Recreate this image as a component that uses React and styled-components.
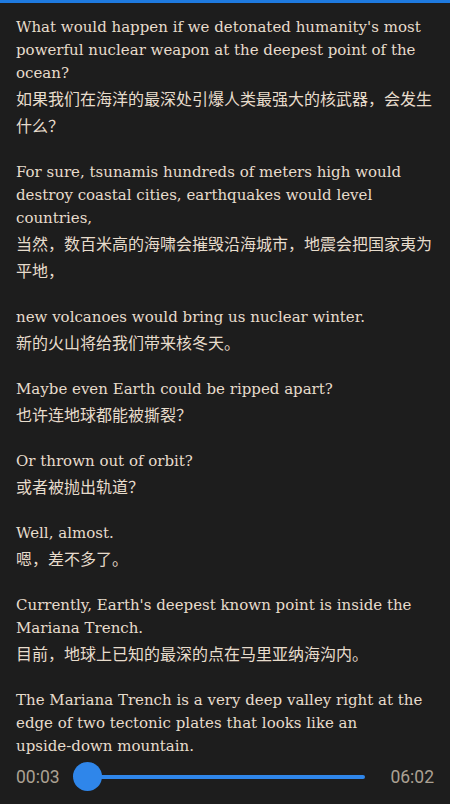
import React from 'react';
import styled, { createGlobalStyle } from 'styled-components';

const GlobalStyle = createGlobalStyle`
  html, body {
    margin: 0;
    padding: 0;
    background: #1d1d1d;
  }
`;

const Screen = styled.div`
  width: 450px;
  height: 804px;
  display: flex;
  flex-direction: column;
  background: #1d1d1d;
  border-top: 3px solid #1e7ae0;
  box-sizing: border-box;
  overflow: hidden;
`;

const Transcript = styled.div`
  flex: 1;
  min-height: 0;
  overflow: hidden;
  padding: 12.5px 16px 0 16px;
  display: flex;
  flex-direction: column;
  gap: 22px;
`;

const Paragraph = styled.div`
  display: flex;
  flex-direction: column;
  flex-shrink: 0;
`;

const English = styled.p`
  margin: 0;
  font-family: "DejaVu Serif", "Liberation Serif", serif;
  font-size: 15px;
  line-height: 23px;
  color: #e7dccc;
`;

const Unbroken = styled.span`
  white-space: nowrap;
`;

const Chinese = styled.p`
  margin: 0;
  font-family: "Noto Sans CJK SC", sans-serif;
  font-size: 16px;
  line-height: 27px;
  color: #e7dccc;
`;

const Player = styled.div`
  height: 47px;
  flex-shrink: 0;
  display: flex;
  align-items: center;
  padding: 0 16px 8px;
  box-sizing: border-box;
  background: #1d1d1d;
`;

const Time = styled.span`
  font-family: "Roboto", "Liberation Sans", sans-serif;
  font-size: 17.5px;
  color: #aba193;
`;

const Slider = styled.div`
  position: relative;
  flex: 1;
  height: 29px;
  margin: 0 25px 0 13px;
`;

const Track = styled.div`
  position: absolute;
  left: 14px;
  right: 0;
  top: 50%;
  height: 4px;
  transform: translateY(-50%);
  background: #2f86ea;
  border-radius: 2px;
`;

const Thumb = styled.div`
  position: absolute;
  top: 0;
  width: 29px;
  height: 29px;
  border-radius: 50%;
  background: #2f86ea;
`;

const lines = [
  ["What would happen if we detonated humanity's most powerful nuclear weapon at the deepest point of the ocean?", '如果我们在海洋的最深处引爆人类最强大的核武器，会发生什么？'],
  ['For sure, tsunamis hundreds of meters high would destroy coastal cities, earthquakes would level countries,', '当然，数百米高的海啸会摧毁沿海城市，地震会把国家夷为平地，'],
  ['new volcanoes would bring us nuclear winter.', '新的火山将给我们带来核冬天。'],
  ['Maybe even Earth could be ripped apart?', '也许连地球都能被撕裂？'],
  ['Or thrown out of orbit?', '或者被抛出轨道？'],
  ['Well, almost.', '嗯，差不多了。'],
  ["Currently, Earth's deepest known point is inside the Mariana Trench.", '目前，地球上已知的最深的点在马里亚纳海沟内。'],
  [
    <>The Mariana Trench is a very deep valley right at the edge of two tectonic plates that looks like an <Unbroken>upside-down</Unbroken> mountain.</>,
    '马里亚纳海沟是位于两个构造板块边缘的一个非常深的山谷，看起来像一座倒置的山。',
  ],
];

const App = () => (
  <>
    <GlobalStyle />
    <Screen>
      <Transcript>
        {lines.map(([en, zh]) => (
          <Paragraph key={zh}>
            <English>{en}</English>
            <Chinese>{zh}</Chinese>
          </Paragraph>
        ))}
      </Transcript>
      <Player>
        <Time>00:03</Time>
        <Slider>
          <Track />
          <Thumb style={{ left: '0%' }} />
        </Slider>
        <Time>06:02</Time>
      </Player>
    </Screen>
  </>
);

export default App;
